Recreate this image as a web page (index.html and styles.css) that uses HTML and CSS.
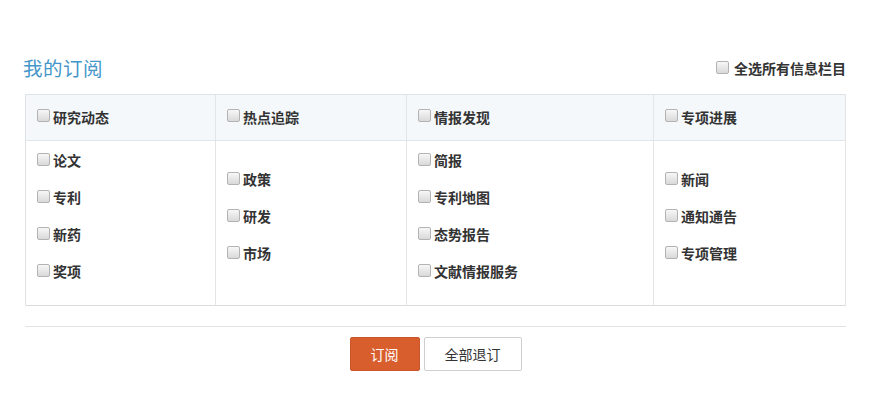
FILE: index.html
```html
<!DOCTYPE html>
<html lang="zh-CN">
<head>
<meta charset="utf-8">
<title>我的订阅</title>
<link rel="stylesheet" href="styles.css">
</head>
<body>
<div class="page">
  <div class="top">
    <h2 class="title">我的订阅</h2>
    <label class="chk all"><input type="checkbox"><span>全选所有信息栏目</span></label>
  </div>
  <div class="grid">
    <div class="head"><label class="chk"><input type="checkbox"><span>研究动态</span></label></div>
    <div class="head"><label class="chk"><input type="checkbox"><span>热点追踪</span></label></div>
    <div class="head"><label class="chk"><input type="checkbox"><span>情报发现</span></label></div>
    <div class="head last"><label class="chk"><input type="checkbox"><span>专项进展</span></label></div>

    <div class="cell">
      <label class="chk item"><input type="checkbox"><span>论文</span></label>
      <label class="chk item"><input type="checkbox"><span>专利</span></label>
      <label class="chk item"><input type="checkbox"><span>新药</span></label>
      <label class="chk item"><input type="checkbox"><span>奖项</span></label>
    </div>
    <div class="cell">
      <label class="chk item"><input type="checkbox"><span>政策</span></label>
      <label class="chk item"><input type="checkbox"><span>研发</span></label>
      <label class="chk item"><input type="checkbox"><span>市场</span></label>
    </div>
    <div class="cell">
      <label class="chk item"><input type="checkbox"><span>简报</span></label>
      <label class="chk item"><input type="checkbox"><span>专利地图</span></label>
      <label class="chk item"><input type="checkbox"><span>态势报告</span></label>
      <label class="chk item"><input type="checkbox"><span>文献情报服务</span></label>
    </div>
    <div class="cell last">
      <label class="chk item"><input type="checkbox"><span>新闻</span></label>
      <label class="chk item"><input type="checkbox"><span>通知通告</span></label>
      <label class="chk item"><input type="checkbox"><span>专项管理</span></label>
    </div>
  </div>
  <div class="actions">
    <button class="btn primary" type="button">订阅</button>
    <button class="btn default" type="button">全部退订</button>
  </div>
</div>
</body>
</html>
```

FILE: styles.css
```css
html, body {
  margin: 0;
  padding: 0;
  background: #fff;
}
body {
  font-family: "Noto Sans CJK SC", "Microsoft YaHei", "Liberation Sans", sans-serif;
  color: #333;
  font-size: 14px;
}
.page {
  width: 821px;
  padding: 54px 0 0 25px;
}
.top {
  display: flex;
  align-items: center;
  justify-content: space-between;
  height: 28px;
  margin-bottom: 12px;
}
.title {
  margin: 0 0 0 -2px;
  font-size: 19.5px;
  font-weight: normal;
  line-height: 28px;
  color: #4596c9;
  letter-spacing: 0.5px;
}
.chk {
  display: flex;
  align-items: center;
  font-weight: bold;
  color: #333;
  line-height: 20px;
}
.chk input {
  -webkit-appearance: none;
  appearance: none;
  width: 13px;
  height: 13px;
  margin: 0 3px 0 4px;
  border: 1px solid #b3b3b3;
  border-radius: 2px;
  background: linear-gradient(#f7f7f7, #d9d9d9);
  box-sizing: border-box;
  flex: none;
  position: relative;
  top: -1px;
}
.all input {
  margin-right: 5px;
}
.grid {
  display: grid;
  grid-template-columns: 190px 191px 247px 192px;
  border-top: 1px solid #e0e3e6;
  border-left: 1px solid #e0e3e6;
  box-sizing: border-box;
  width: 821px;
}
.head {
  height: 46px;
  display: flex;
  align-items: center;
  padding: 0 0 2px 7px;
  box-sizing: border-box;
  background: #f5f8fa;
  border-right: 1px solid #e2e4e6;
  border-bottom: 1px solid #dfe6ec;
}
.cell {
  display: flex;
  flex-direction: column;
  justify-content: center;
  padding: 8px 0 8px 7px;
  height: 165px;
  box-sizing: border-box;
  border-right: 1px solid #e2e4e6;
  border-bottom: 1px solid #dcdcdc;
}
.item {
  height: 37px;
  padding-bottom: 14px;
  box-sizing: border-box;
  line-height: 23px;
}
.actions {
  margin-top: 20px;
  border-top: 1px solid #e3e3e3;
  padding-top: 10px;
  display: flex;
  justify-content: center;
  gap: 4px;
}
.btn {
  height: 34px;
  font-family: inherit;
  font-size: 14px;
  border-radius: 2px;
  cursor: pointer;
  padding: 0;
}
.primary {
  width: 70px;
  background: #d95e2e;
  border: 1px solid #c9552a;
  color: #fff;
}
.default {
  width: 98px;
  background: #fff;
  border: 1px solid #cfcfcf;
  color: #333;
}
```
